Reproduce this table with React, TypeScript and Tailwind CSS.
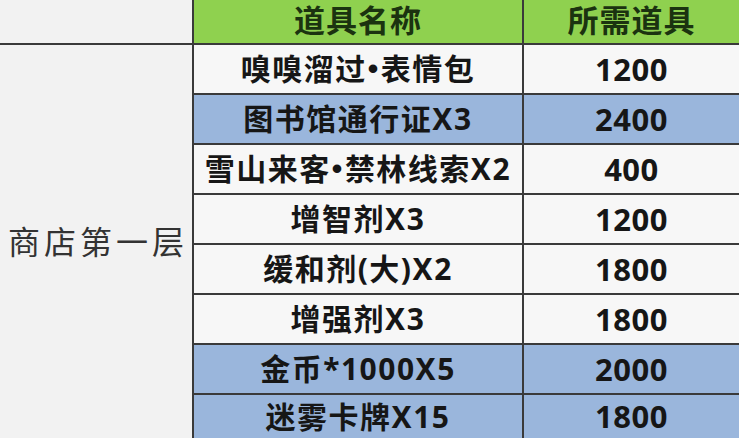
const rows = [
  { name: ["嗅嗅溜过", "表情包"], cost: "1200", blue: false },
  { name: ["图书馆通行证X3"], cost: "2400", blue: true },
  { name: ["雪山来客", "禁林线索X2"], cost: "400", blue: false },
  { name: ["增智剂X3"], cost: "1200", blue: false },
  { name: ["缓和剂(大)X2"], cost: "1800", blue: false },
  { name: ["增强剂X3"], cost: "1800", blue: false },
  { name: ["金币*1000X5"], cost: "2000", blue: true },
  { name: ["迷雾卡牌X15"], cost: "1800", blue: true },
];

const font = { fontFamily: '"Noto Sans", "Noto Sans CJK SC", sans-serif' };

export default function App() {
  return (
    <div className="w-[739px] h-[438px] overflow-hidden bg-[#f2f2f2]" style={font}>
      <div className="grid grid-cols-[192px_328px_1fr] grid-rows-[43px_repeat(7,48px)_43px] gap-[2px] bg-[#3a3a3a]">
        {/* corner */}
        <div className="bg-[#f2f2f2]" />
        <div className="bg-[#8fd14f] flex items-center justify-center pb-[3px] text-[31px] font-bold text-[#1b3310] leading-[34px] tracking-[1px]">
          道具名称
        </div>
        <div className="bg-[#8fd14f] flex items-center justify-center pb-[3px] text-[31px] font-bold text-[#1b3310] leading-[34px] tracking-[1px]">
          所需道具
        </div>

        {/* merged shop cell */}
        <div className="row-span-8 bg-[#f2f2f2] flex items-center justify-center text-[32px] tracking-[4px] pl-[4px] text-[#333] leading-none">
          商店第一层
        </div>

        {rows.map((r, i) => (
          <div key={i} className="contents">
            <div
              className={`${r.blue ? "bg-[#9ab6dc]" : "bg-[#f7f7f7]"} flex items-center justify-center text-[30px] font-bold text-[#161616] leading-none tracking-[1.5px] whitespace-nowrap`}
            >
              {r.name[0]}
              {r.name.length > 1 && (
                <>
                  <span className="mx-[1px]" style={{ fontFamily: '"Liberation Sans", sans-serif' }}>
                    •
                  </span>
                  {r.name[1]}
                </>
              )}
            </div>
            <div
              className={`${r.blue ? "bg-[#9ab6dc]" : "bg-[#f7f7f7]"} flex items-center justify-center text-[31px] font-bold text-[#161616] leading-none tracking-[0.5px]`}
            >
              {r.cost}
            </div>
          </div>
        ))}
      </div>
    </div>
  );
}
